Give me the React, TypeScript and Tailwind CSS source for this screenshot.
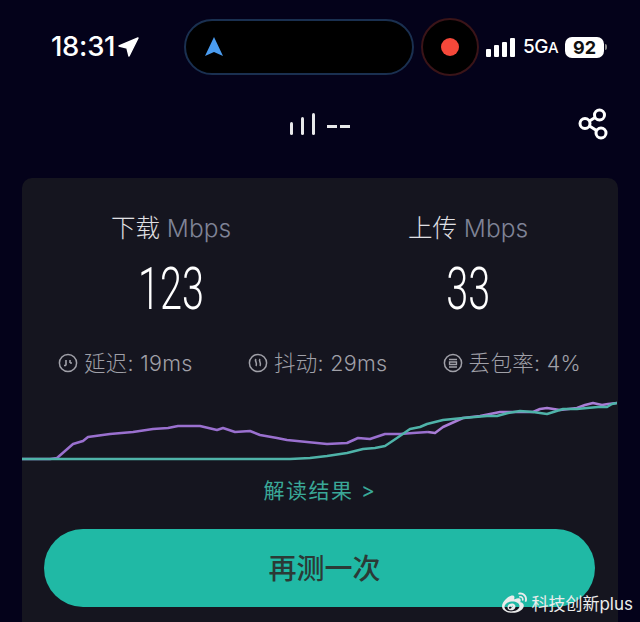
import { FaWeibo } from "react-icons/fa";

const cjk = "font-['Inter','Noto_Sans_CJK_SC',sans-serif]";

const purple =
	"20,458 50,458 57,457 65,450 73,443 83,440 88,436 110,433 133,431 153,428 168,427 178,425 200,425 217,429 223,427 235,431 250,430 260,434 277,437 287,439 307,441 327,443 347,442 358,437 370,438 385,433 400,433 413,432 428,431";
const teal =
	"20,458 290,458 310,457 327,455 347,452 363,448 375,447 385,445 397,437 410,428 420,426 427,423 443,419 463,417 487,415 497,415 508,412 520,410 533,411 547,413 563,408 577,408 587,407 598,406 607,406 612,403 617,402";
const purpleEnd =
	"428,431 435,432 443,426 463,417 480,415 490,413 500,411 517,411 533,411 540,408 547,407 560,409 577,407 585,404 593,402 602,404 608,403 617,402";

function Metric({ icon, label }: { icon: React.ReactNode; label: string }) {
	return (
		<div className="flex items-center gap-[6px] text-[21.5px] font-light tracking-[0.3px] text-[#a0a0a8]">
			<svg
				width="20"
				height="20"
				viewBox="0 0 20 20"
				fill="none"
				stroke="currentColor"
				strokeWidth="1.5"
			>
				<circle cx="10" cy="10" r="8.6" />
				{icon}
			</svg>
			<span>{label}</span>
		</div>
	);
}

function Speed({ title, value }: { title: string; value: string }) {
	return (
		<div className="flex w-[240px] flex-col items-center">
			<div className="text-[24.5px] leading-[32px] font-light text-[#e0e0e4]">
				{title} <span className="text-[#7f8396]">Mbps</span>
			</div>
			<div className="mt-[13px] origin-center scale-x-[0.66] font-['Roboto',sans-serif] text-[60px] leading-[64px] font-light text-white">
				{value}
			</div>
		</div>
	);
}

export default function App() {
	return (
		<div
			className={`relative h-[622px] w-[640px] overflow-hidden bg-[#04021a] ${cjk}`}
		>
			{/* status bar */}
			<div className="flex h-[92px] items-center pt-[2px] pl-[51px]">
				<div className="flex w-[133px] items-center">
					<span className="text-[27.5px] font-medium tracking-[-0.3px] text-white">
						18:31
					</span>
					<svg width="24" height="24" viewBox="0 0 24 24" className="ml-[1px]">
						<path
							d="M3 11 L22 3 L13 21 L11 13 Z"
							fill="#fff"
							stroke="#fff"
							strokeWidth="1.5"
							strokeLinejoin="round"
						/>
					</svg>
				</div>
				<div className="flex h-[56px] w-[230px] items-center rounded-full border-2 border-[#1a3050] bg-black pl-[18px]">
					<svg width="20" height="22" viewBox="0 0 20 22">
						<path d="M10 1 L19 20 L10 16 L1 20 Z" fill="#4a9cf0" />
					</svg>
				</div>
				<div className="ml-[7px] flex h-[58px] w-[58px] items-center justify-center rounded-full border-2 border-[#3a1418] bg-black">
					<div className="h-[18px] w-[18px] rounded-full bg-[#f5483a]" />
				</div>
				<div className="ml-[7px] flex h-[20px] items-end gap-[3px]">
					<div className="h-[8px] w-[5px] rounded-[1px] bg-white" />
					<div className="h-[12px] w-[5px] rounded-[1px] bg-white" />
					<div className="h-[15px] w-[5px] rounded-[1px] bg-white" />
					<div className="h-[19px] w-[5px] rounded-[1px] bg-white" />
				</div>
				<span className="ml-[8px] text-[19px] font-medium tracking-[-0.5px] text-white">
					5G<span className="text-[15px]">A</span>
				</span>
				<div className="ml-[7px] flex h-[21px] w-[39px] items-center justify-center rounded-[7px] bg-white text-[18px] font-bold text-[#111]">
					92
				</div>
				<div className="ml-[1px] h-[6px] w-[2px] rounded-r-full bg-[#888]" />
			</div>

			{/* title row */}
			<div className="flex h-[86px] items-center justify-between pr-[32px] pb-[22px] pl-[290px]">
				<div className="flex items-center">
					<div className="flex items-end gap-[8px]">
						<div className="h-[13px] w-[3px] rounded-full bg-[#e8e8ea]" />
						<div className="h-[18px] w-[3px] rounded-full bg-[#e8e8ea]" />
						<div className="h-[22px] w-[3px] rounded-full bg-[#e8e8ea]" />
					</div>
					<div className="mt-[5px] ml-[12px] flex gap-[3px]">
						<div className="h-[3px] w-[10px] bg-[#e8e8ea]" />
						<div className="h-[3px] w-[10px] bg-[#e8e8ea]" />
					</div>
				</div>
				<svg
					width="30"
					height="32"
					viewBox="0 0 30 32"
					fill="none"
					stroke="#fff"
					strokeWidth="3"
				>
					<circle cx="21.5" cy="7" r="5" />
					<circle cx="7" cy="15.5" r="5" />
					<circle cx="23" cy="25" r="5" />
					<path d="M11.5 13 L17 9.5 M11.5 18 L18.5 22.5" />
				</svg>
			</div>

			{/* result card */}
			<div className="mx-[22px] h-[444px] rounded-t-[10px] bg-[#15151f] pt-[34px]">
				<div className="flex justify-between pr-[30px] pl-[29px]">
					<Speed title="下载" value="123" />
					<Speed title="上传" value="33" />
				</div>
				<div className="mt-[26px] flex justify-between pr-[37px] pl-[36px]">
					<Metric
						label="延迟: 19ms"
						icon={<path d="M8 7v5.5M6 12.5h2M12 7v3M12 10h2" strokeWidth="1.6" />}
					/>
					<Metric
						label="抖动: 29ms"
						icon={
							<path d="M8 6c-2 2 2 4 0 7M12 6c-2 2 2 4 0 7" strokeWidth="1.6" />
						}
					/>
					<Metric
						label="丢包率: 4%"
						icon={
							<path
								d="M6 6.5h8M6.5 9h7v2.5h-7zM6 14h8"
								strokeWidth="1.3"
							/>
						}
					/>
				</div>

				<svg
					width="595"
					height="70"
					viewBox="22 395 595 70"
					fill="none"
					className="mt-[17px] block"
					strokeLinejoin="round"
				>
					<polyline points={purple} stroke="#9a70cf" strokeWidth="2.5" />
					<polyline points={purpleEnd} stroke="#a97dd6" strokeWidth="2.5" />
					<polyline points={teal} stroke="#4fb3a9" strokeWidth="2.5" />
				</svg>

				<div className="mt-[9px] text-center text-[21px] leading-[32px] tracking-[1.5px] text-[#3aa898]">
					解读结果 &gt;
				</div>

				<button className="mx-[22px] mt-[22px] flex h-[78px] w-[551px] items-center justify-center rounded-[39px] bg-[#20b9a5] pt-[2px] pl-[10px] text-[28px] font-medium text-[#2b3a36]">
					再测一次
				</button>
			</div>

			{/* watermark */}
			<div className="absolute right-[7px] bottom-[6px] flex items-center gap-[4px] text-[17px] leading-[20px] text-[#ececec]">
				<FaWeibo size={25} />
				<span>科技创新plus</span>
			</div>
		</div>
	);
}
